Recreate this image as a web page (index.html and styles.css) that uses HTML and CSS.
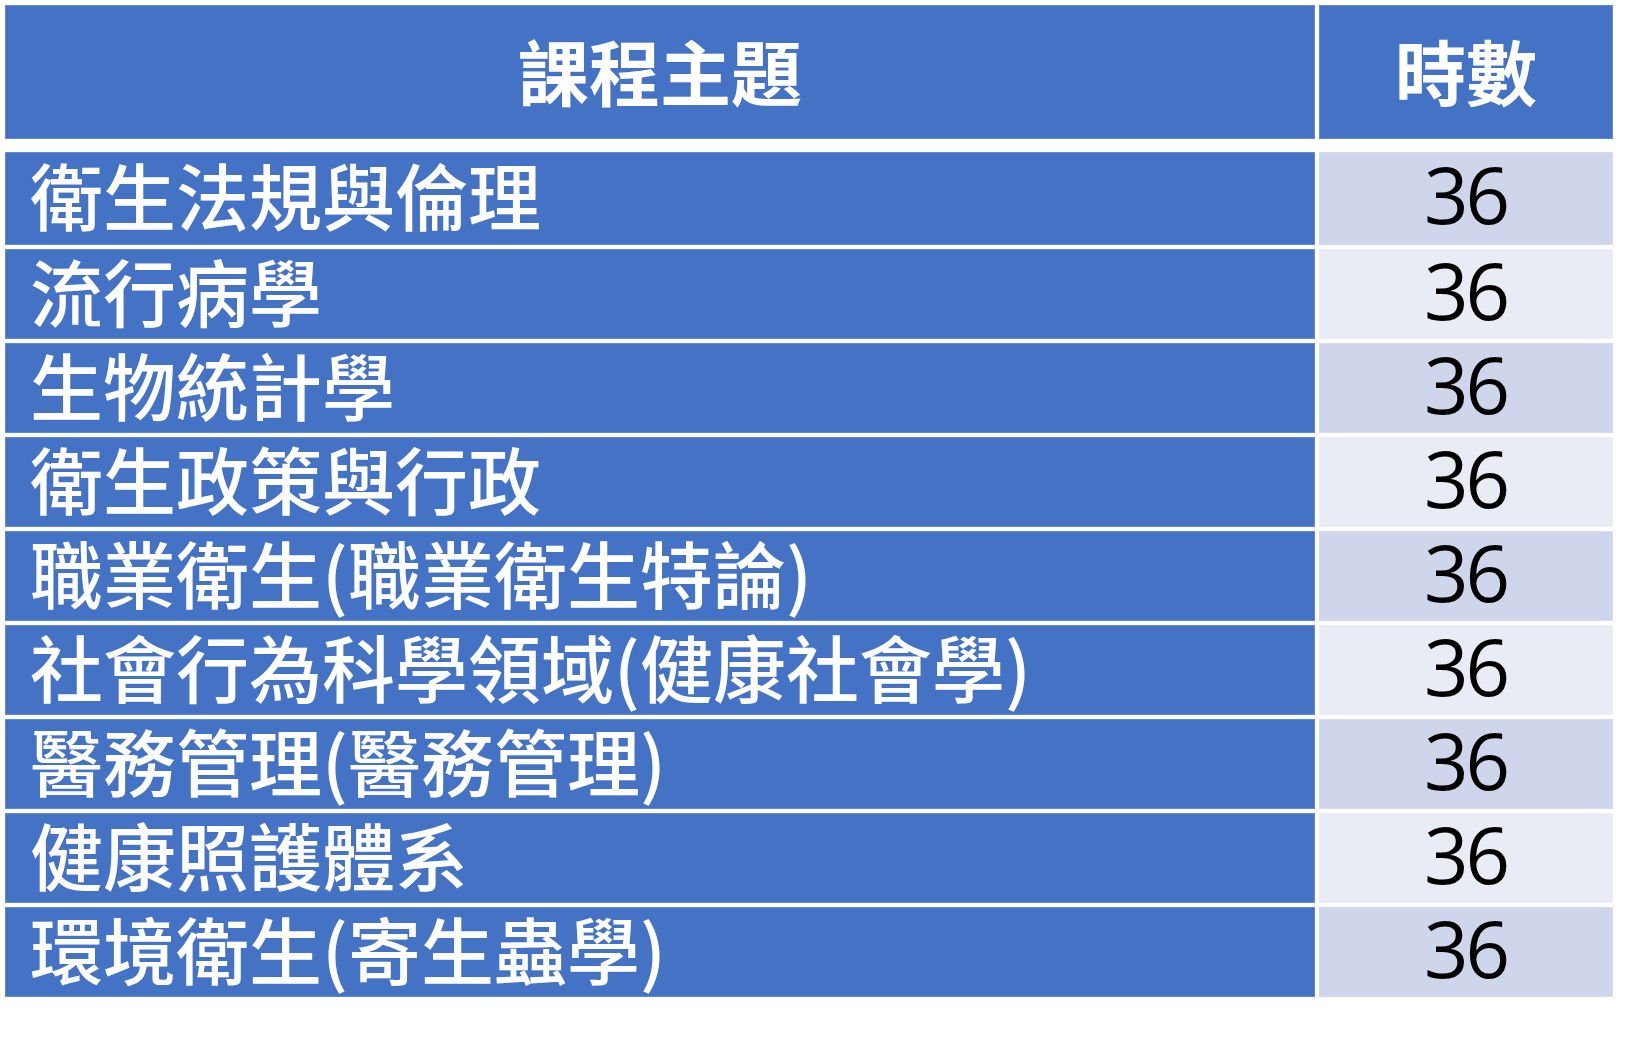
FILE: index.html
```html
<!DOCTYPE html>
<html lang="zh-Hant">
<head>
<meta charset="utf-8">
<title>課程主題</title>
<link rel="stylesheet" href="styles.css">
</head>
<body>
<div class="table">
  <div class="thead">
    <div class="cell head topic">課程主題</div>
    <div class="cell head hours">時數</div>
  </div>
  <div class="tbody">
    <div class="cell topic">衛生法規與倫理</div>
    <div class="cell hours odd">36</div>

    <div class="cell topic">流行病學</div>
    <div class="cell hours even">36</div>

    <div class="cell topic">生物統計學</div>
    <div class="cell hours odd">36</div>

    <div class="cell topic">衛生政策與行政</div>
    <div class="cell hours even">36</div>

    <div class="cell topic">職業衛生(職業衛生特論)</div>
    <div class="cell hours odd">36</div>

    <div class="cell topic">社會行為科學領域(健康社會學)</div>
    <div class="cell hours even">36</div>

    <div class="cell topic">醫務管理(醫務管理)</div>
    <div class="cell hours odd">36</div>

    <div class="cell topic">健康照護體系</div>
    <div class="cell hours even">36</div>

    <div class="cell topic">環境衛生(寄生蟲學)</div>
    <div class="cell hours odd">36</div>
  </div>
</div>
</body>
</html>
```

FILE: styles.css
```css
html, body {
  margin: 0;
  padding: 0;
  background: #ffffff;
}

body {
  padding: 5px 0 0 5px;
}

.table {
  display: flex;
  flex-direction: column;
  gap: 13px;
  width: 1608px;
}

.thead,
.tbody {
  display: grid;
  grid-template-columns: 1310px 294px;
  column-gap: 4px;
  row-gap: 4px;
}

.thead {
  grid-template-rows: 134px;
}

.tbody {
  grid-template-rows: 93px repeat(8, 90px);
}

.cell {
  display: flex;
  align-items: center;
  line-height: 1;
  box-sizing: border-box;
  box-shadow: inset 0 0 0 1px rgba(255, 255, 255, 0.18);
}

.topic {
  background: #4472c4;
  color: #ffffff;
  font-family: "Noto Sans CJK TC", "Noto Sans CJK SC", sans-serif;
  font-weight: 500;
  font-size: 73px;
  padding-left: 25px;
  padding-bottom: 10px;
  white-space: nowrap;
}

.hours {
  justify-content: center;
  font-family: "Open Sans", "Noto Sans", sans-serif;
  font-size: 78px;
  letter-spacing: -3px;
  padding-right: 1px;
  padding-bottom: 9px;
  color: #000000;
}

.head {
  background: #4472c4;
  color: #ffffff;
  justify-content: center;
  font-family: "Noto Sans CJK TC", "Noto Sans CJK SC", sans-serif;
  font-weight: 700;
  font-size: 71px;
  letter-spacing: 0;
  padding: 0 0 6px 0;
}

.odd {
  background: #cfd5ea;
}

.even {
  background: #e9ebf5;
}
```
